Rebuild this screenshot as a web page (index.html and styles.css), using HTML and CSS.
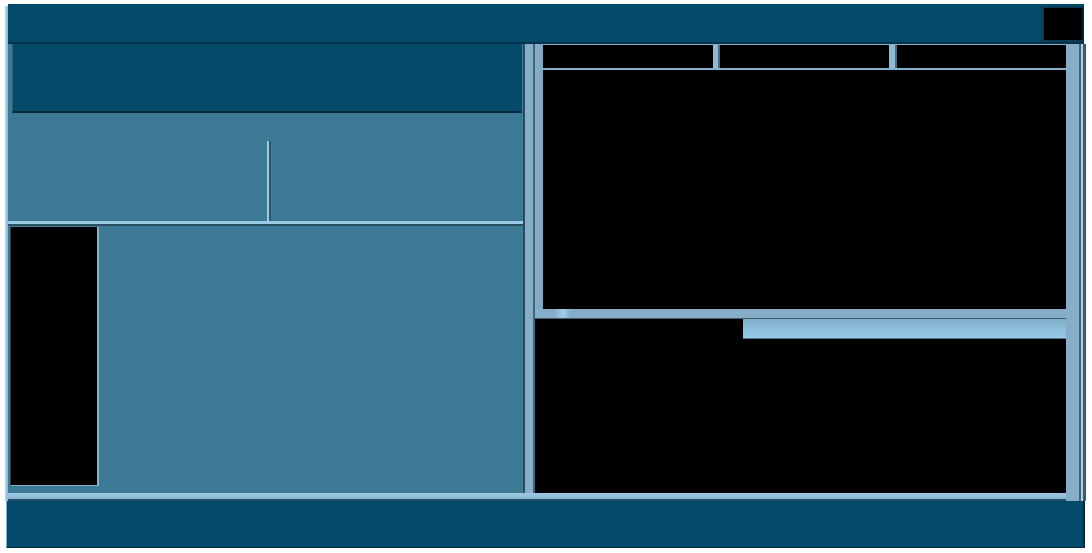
FILE: index.html
```html
<!DOCTYPE html>
<html lang="en">
<head>
    <meta charset="UTF-8">
    <title>Workspace</title>
    <link rel="stylesheet" href="styles.css">
</head>
<body>
    <div class="app">
        <div class="frame">
            <div class="frame-edge"></div>
            <div class="frame-body">
                <header class="titlebar">
                    <div class="close"></div>
                </header>
                <div class="workspace">
                    <div class="panes">
                        <div class="columns">
                            <!-- left side -->
                            <section class="left">
                                <div class="left-head"></div>
                                <div class="left-split">
                                    <div class="left-half"></div>
                                    <div class="left-divider"></div>
                                    <div class="left-half"></div>
                                </div>
                                <div class="left-lower">
                                    <div class="side-list"></div>
                                </div>
                            </section>
                            <div class="splitter"></div>
                            <!-- right side -->
                            <section class="right">
                                <div class="right-top">
                                    <div class="right-edge"></div>
                                    <div class="viewer">
                                        <nav class="tabs">
                                            <div class="tab tab-first"></div>
                                            <div class="tab-sep"></div>
                                            <div class="tab"></div>
                                            <div class="tab-sep tab-sep-wide"></div>
                                            <div class="tab"></div>
                                        </nav>
                                    </div>
                                </div>
                                <div class="right-hstrip"></div>
                                <div class="right-bottom">
                                    <div class="info-bar"></div>
                                </div>
                            </section>
                        </div>
                        <div class="hstrip"></div>
                    </div>
                    <div class="vstrip"></div>
                </div>
            </div>
        </div>
        <footer class="statusbar"></footer>
    </div>
</body>
</html>
```

FILE: styles.css
```css
/* Layout */
body {
    margin: 0;
    background: #fff;
    font-family: "Liberation Sans", Arial, sans-serif;
}
.app {
    display: flex;
    flex-direction: column;
    width: 1092px;
    height: 553px;
    padding-top: 4px;
    box-sizing: border-box;
}
.frame {
    display: flex;
    margin-left: 5px;
}
.frame-edge {
    width: 3px;
    margin-top: 2px;
    background: linear-gradient(90deg, #b3dbef, #86b6d1);
}
.frame-body {
    width: 1078px;
    display: flex;
    flex-direction: column;
}

/* Title bar */
.titlebar {
    width: 1076px;
    height: 38px;
    background: #044a6b;
    border-bottom: 2px solid #05324a;
    display: flex;
    justify-content: flex-end;
    align-items: flex-start;
}
.close {
    width: 38px;
    height: 32px;
    margin-top: 2px;
    background: #000;
    border: 2px solid #0d3a55;
    border-right-color: #062637;
}

/* Workspace */
.workspace {
    display: flex;
    height: 457px;
}
.panes {
    width: 1058px;
    display: flex;
    flex-direction: column;
    border-bottom: 2px solid #244e63;
}
.columns {
    display: flex;
    height: 449px;
}
.hstrip {
    height: 6px;
    background: linear-gradient(180deg, #9cc9e1, #8ab7d0);
}
.vstrip {
    width: 20px;
    box-sizing: border-box;
    background: linear-gradient(90deg, #86aec8 0, #86aec8 13px, #3e6378 13px, #3e6378 15px, #a9d0e5 15px, #a9d0e5 17px, #3b5b6c 17px);
}

/* Left side */
.left {
    width: 515px;
    display: flex;
    flex-direction: column;
    background: #3d7a96;
}
.left-head {
    height: 67px;
    margin: 0 1px 0 4px;
    background: #044a6b;
    border-bottom: 2px solid #062a3c;
    border-left: 1px solid #2a5f78;
}
.left-split {
    display: flex;
    height: 108px;
    border-bottom: 3px solid #9ccbe4;
}
.left-half {
    flex: 1;
}
.left-half:first-child {
    flex: 0 0 259px;
}
.left-divider {
    width: 2px;
    margin-top: 28px;
    background: #9ccbe4;
    border-right: 2px solid #2f5a6e;
}
.left-lower {
    flex: 1;
    display: flex;
    border-top: 2px solid #2b5062;
}
.side-list {
    width: 86px;
    height: 258px;
    margin: 1px 0 0 2px;
    background: #000;
    border-right: 2px solid #86b1c9;
    border-bottom: 1px solid #86b1c9;
    border-left: 1px solid #1e3d4c;
}

.splitter {
    width: 8px;
    background: #86aec8;
    border-left: 2px solid #2c4c5e;
    border-right: 2px solid #3f6479;
}

/* Right side */
.right {
    width: 531px;
    display: flex;
    flex-direction: column;
}
.right-top {
    display: flex;
    height: 265px;
}
.right-edge {
    width: 8px;
    background: linear-gradient(90deg, #86aec8, #7ea6bf);
}
.viewer {
    flex: 1;
    background: #000;
}
.tabs {
    display: flex;
    height: 23px;
    border-top: 1px solid #86aec8;
    border-bottom: 2px solid #86b2cb;
}
.tab {
    flex: 0 0 169px;
}
.tab-first {
    flex-basis: 170px;
}
.tab-sep {
    width: 5px;
    background: #8fbad3;
    border-right: 2px solid #4b6f83;
}
.tab-sep-wide {
    width: 6px;
}
.right-hstrip {
    height: 10px;
    background: linear-gradient(90deg, #86aec8 0, #86aec8 20px, #9fd0ea 28px, #86aec8 36px, #86aec8 100%);
    border-bottom: 1px solid #3c5f72;
    box-sizing: border-box;
}
.right-bottom {
    flex: 1;
    background: #000;
}
.info-bar {
    height: 19px;
    margin-left: 208px;
    background: linear-gradient(180deg, #80adc8, #8fc2df 60%, #95c9e6);
    border-bottom: 1px solid #4f7a90;
}

/* Status bar */
.statusbar {
    width: 1076px;
    height: 46px;
    margin-left: 6px;
    background: #044a6b;
    border-left: 1px solid #7eb0cb;
    border-right: 2px solid #062b3e;
    border-bottom: 1px solid #02283a;
}
```
